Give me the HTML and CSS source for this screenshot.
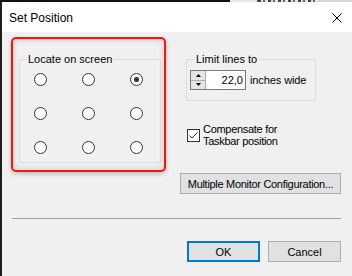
FILE: index.html
```html
<!DOCTYPE html>
<html>
<head>
<meta charset="utf-8">
<link rel="stylesheet" href="styles.css">
</head>
<body>
<div class="screen">
  <div class="topstrip">
    <div class="ts-black"></div>
    <div class="ts-gap"></div>
    <div class="ts-rule"></div>
    <div class="ts-text"></div>
    <div class="ts-rest"></div>
  </div>
  <div class="main">
    <div class="edge"></div>
    <div class="window">
      <div class="titlebar">
        <span class="title">Set Position</span>
        <svg class="close" width="10" height="10" viewBox="0 0 10 10"><path d="M0.5 0.5 L9.5 9.5 M9.5 0.5 L0.5 9.5" stroke="#000" stroke-width="1" fill="none"/></svg>
      </div>
      <div class="dialog-body">
        <div class="top-row">
          <div class="highlight">
            <fieldset class="group locate">
              <legend>Locate on screen</legend>
              <div class="radio-grid">
                <span class="radio"></span>
                <span class="radio"></span>
                <span class="radio checked"></span>
                <span class="radio"></span>
                <span class="radio"></span>
                <span class="radio"></span>
                <span class="radio"></span>
                <span class="radio"></span>
                <span class="radio"></span>
              </div>
            </fieldset>
          </div>
          <div class="right-col">
            <fieldset class="group limit">
              <legend>Limit lines to</legend>
              <div class="spin-row">
                <div class="spin">
                  <div class="spin-btns">
                    <div class="spin-btn up"><svg width="5" height="3" viewBox="0 0 5 3"><path d="M2.5 0 L5 3 L0 3 Z" fill="#000"/></svg></div>
                    <div class="spin-btn down"><svg width="5" height="3" viewBox="0 0 5 3"><path d="M0 0 L5 0 L2.5 3 Z" fill="#000"/></svg></div>
                  </div>
                  <div class="spin-edit">22,0</div>
                </div>
                <span class="unit">inches wide</span>
              </div>
            </fieldset>
            <div class="check-row">
              <span class="checkbox"><svg width="11" height="11" viewBox="0 0 11 11"><path d="M1.5 5.5 L4 8 L9.5 2.5" stroke="#333" stroke-width="1" fill="none"/></svg></span>
              <div class="check-label">Compensate for<br>Taskbar position</div>
            </div>
            <button class="btn multi">Multiple Monitor Configuration...</button>
          </div>
        </div>
        <div class="separator"></div>
        <div class="actions">
          <button class="btn default">OK</button>
          <button class="btn">Cancel</button>
        </div>
      </div>
    </div>
  </div>
</div>
</body>
</html>
```
FILE: styles.css
```css
html, body {
  margin: 0;
  padding: 0;
}
body {
  width: 352px;
  height: 276px;
  overflow: hidden;
  font-family: "Liberation Sans", Arial, sans-serif;
  font-size: 11px;
  color: #000;
  background: #f0f0f0;
}
.screen {
  display: flex;
  flex-direction: column;
  width: 352px;
  height: 276px;
}
.topstrip {
  display: flex;
  height: 2px;
  flex: 0 0 2px;
}
.ts-black { width: 230px; background: #111; }
.ts-gap { width: 27px; background: #e8e8e8; }
.ts-rule { width: 1px; background: #555; }
.ts-text {
  width: 60px;
  background: repeating-linear-gradient(90deg, #444 0 3px, #ddd 3px 5px, #666 5px 7px, #e6e6e6 7px 10px);
}
.ts-rest { flex: 1; background: #d6d6d6; }
.main {
  display: flex;
  flex: 1;
}
.edge {
  width: 2px;
  background: #1e1e1e;
}
.window {
  flex: 1;
  display: flex;
  flex-direction: column;
  background: #f0f0f0;
}
.titlebar {
  height: 30px;
  background: #fff;
  display: flex;
  align-items: center;
  justify-content: space-between;
  padding: 0 10px 0 7px;
}
.title {
  font-size: 12px;
  line-height: 30px;
  padding-top: 1px;
}
.close {
  display: block;
  margin-top: 1px;
}
.dialog-body {
  padding: 5px 11px 0 9px;
}
.top-row {
  display: flex;
  align-items: flex-start;
}
.highlight {
  width: 155px;
  height: 135px;
  box-sizing: border-box;
  border: 2px solid #ff1010;
  border-radius: 5px;
  box-shadow: 0 2px 4px rgba(0,0,0,0.22), inset 0 0 6px rgba(0,0,0,0.16);
  padding: 14px 0 0 6px;
}
.group {
  margin: 0;
  border: 1px solid #dcdcdc;
  min-inline-size: 0;
  box-sizing: border-box;
}
.group legend {
  padding: 0 2px;
  line-height: 13px;
}
.locate {
  width: 142px;
  padding: 7px 0 8px 0;
}
.locate legend {
  margin-left: 6px;
}
.radio-grid {
  display: grid;
  grid-template-columns: repeat(3, 13px);
  grid-auto-rows: 13px;
  column-gap: 35px;
  row-gap: 21px;
  margin-left: 14px;
}
.radio {
  width: 13px;
  height: 13px;
  box-sizing: border-box;
  border: 1px solid #333;
  border-radius: 50%;
  background: #fff;
  display: flex;
  align-items: center;
  justify-content: center;
}
.radio.checked::after {
  content: "";
  width: 5px;
  height: 5px;
  border-radius: 50%;
  background: #333;
}
.right-col {
  margin-left: 14px;
  display: flex;
  flex-direction: column;
  align-items: flex-start;
}
.limit {
  margin: 16px 0 0 6px;
  width: 130px;
  padding: 4px 0 10px 0;
}
.limit legend {
  margin-left: 7px;
}
.spin-row {
  display: flex;
  align-items: center;
  margin-left: 3px;
}
.spin {
  display: flex;
  width: 56px;
  height: 20px;
  box-sizing: border-box;
  border: 1px solid #7a7a7a;
  background: #fff;
}
.spin-btns {
  width: 14px;
  display: flex;
  flex-direction: column;
  border-right: 1px solid #adadad;
}
.spin-btn {
  flex: 1;
  background: #e5e5e5;
  display: flex;
  align-items: center;
  justify-content: center;
}
.spin-btn svg { display: block; }
.spin-btn.up { border-bottom: 1px solid #adadad; }
.spin-edit {
  flex: 1;
  text-align: right;
  padding-right: 2px;
  line-height: 18px;
}
.unit {
  margin-left: 4px;
  letter-spacing: -0.1px;
}
.check-row {
  display: flex;
  align-items: flex-start;
  margin: 22px 0 0 7px;
}
.checkbox {
  width: 13px;
  height: 13px;
  box-sizing: border-box;
  border: 1px solid #333;
  background: #fff;
  margin-top: 6px;
}
.checkbox svg { display: block; }
.check-label {
  margin-left: 3px;
  line-height: 12px;
  letter-spacing: -0.3px;
}
.btn {
  font-family: inherit;
  font-size: 11px;
  color: #000;
  background: #e1e1e1;
  border: 1px solid #adadad;
  height: 21px;
  padding: 0;
  margin: 0;
  box-sizing: border-box;
}
.multi {
  margin-top: 26px;
  width: 161px;
  letter-spacing: -0.3px;
}
.separator {
  height: 1px;
  background: #a0a0a0;
  margin: 24px 0 0 1px;
}
.actions {
  display: flex;
  justify-content: flex-end;
  gap: 8px;
  margin-top: 22px;
}
.actions .btn {
  width: 73px;
}
.btn.default {
  border: 2px solid #0078d7;
}
```
